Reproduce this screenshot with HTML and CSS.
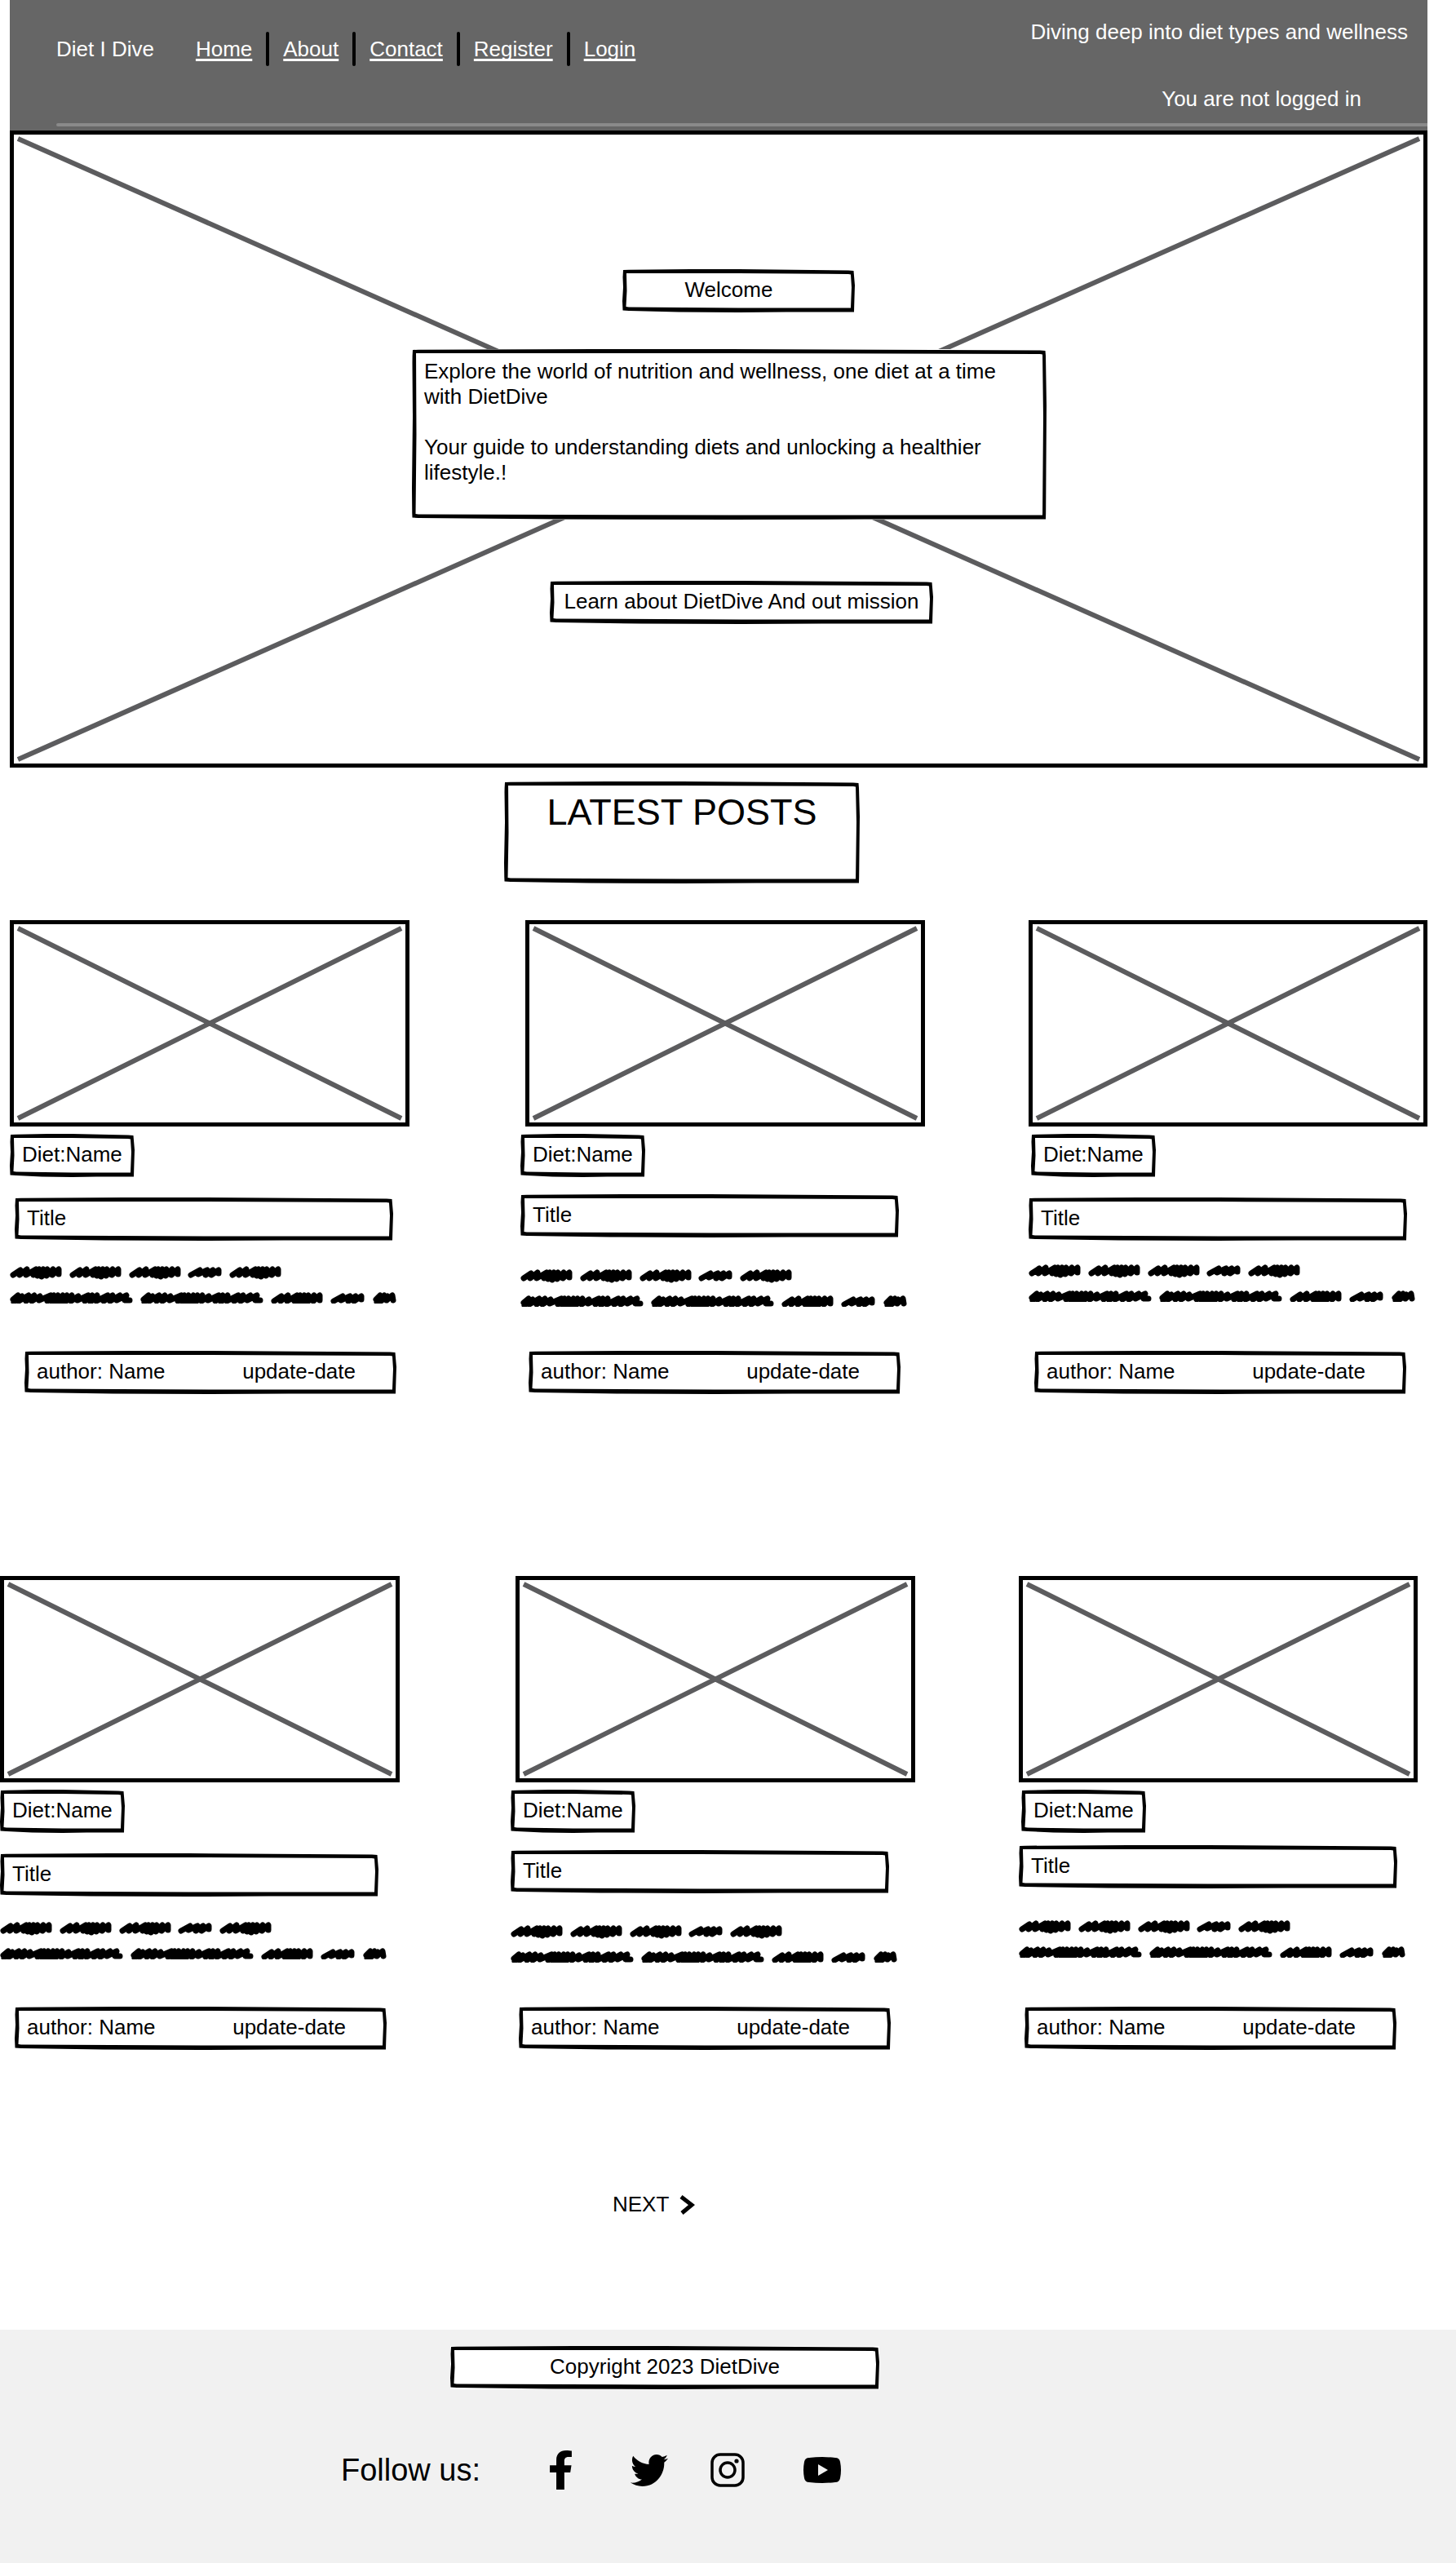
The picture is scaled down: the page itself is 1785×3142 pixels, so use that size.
FILE: index.html
```html
<!DOCTYPE html>
<html lang="en">
<head>
<meta charset="utf-8">
<meta name="viewport" content="width=device-width, initial-scale=1">
<title>Diet I Dive</title>
<link rel="stylesheet" href="styles.css">
</head>
<body>

<svg class="sprite" aria-hidden="true">
  <defs>
    <g id="word-m"><path d="M4 11L13 5L12 11L21 4L20 11L32 4L29 11L36 4L34 12L41 4L39 13L46 4L45 12L53 4L52 11L60 4L60 10"/></g>
    <g id="word-s"><path d="M4 11L15 5L13 10L24 5L22 11L31 5L29 11L38 5L38 9"/></g>
    <g id="word-xs"><path d="M4 9L9 4L5 12L14 4L10 11L18 5L17 10L24 4L25 10"/></g>
    <g id="word-l"><path d="M4 9L10 4L5 12L15 5L11 11L23 4L20 11L30 4L27 11L37 5L36 10L50 4L46 11L54 4L52 12L59 4L57 13L65 4L62 12L70 4L68 12L76 4L75 11L84 5L83 10L96 4L92 11L101 4L99 12L107 4L106 11L120 4L115 11L126 4L123 11L135 4L131 10L143 4L141 10L147 10"/></g>
    <g id="scribble">
      <use href="#word-m"/><use href="#word-m" x="73"/><use href="#word-m" x="146"/><use href="#word-s" x="218"/><use href="#word-m" x="269"/>
      <use href="#word-l" y="32"/><use href="#word-l" x="160" y="32"/><use href="#word-m" x="320" y="32"/><use href="#word-s" x="393" y="32"/><use href="#word-xs" x="445" y="32"/>
    </g>
    <g id="cross"><path d="M0 0L100 100M100 0L0 100" vector-effect="non-scaling-stroke"/></g>
  </defs>
</svg>

<div class="page">
  <header class="header">
    <div class="header-main">
      <nav class="nav" aria-label="Main">
        <span class="brand">Diet I Dive</span>
        <a href="#home">Home</a>
        <span class="sep"></span>
        <a href="#about">About</a>
        <span class="sep"></span>
        <a href="#contact">Contact</a>
        <span class="sep"></span>
        <a href="#register">Register</a>
        <span class="sep"></span>
        <a href="#login">Login</a>
      </nav>
      <div class="header-side">
        <p>Diving deep into diet types and wellness</p>
        <p class="status">You are not logged in</p>
      </div>
    </div>
    <hr class="rule">
  </header>

  <section class="hero">
    <svg class="hero-cross" viewBox="0 0 100 100" preserveAspectRatio="none" aria-hidden="true"><use href="#cross"/></svg>
    <h1 class="box welcome">Welcome</h1>
    <div class="box intro">
      <p>Explore the world of nutrition and wellness, one diet at a time with DietDive</p>
      <p>Your guide to understanding diets and unlocking a healthier lifestyle.!</p>
    </div>
    <a class="box learn" href="#mission">Learn about DietDive And out mission</a>
  </section>

  <h2 class="box latest">LATEST POSTS</h2>
</div>

<main>
  <section class="posts">
    <article class="card">
      <div class="thumb"><svg viewBox="0 0 100 100" preserveAspectRatio="none" aria-hidden="true"><use href="#cross"/></svg></div>
      <div class="box tag">Diet:Name</div>
      <h3 class="box title">Title</h3>
      <svg class="excerpt" viewBox="0 0 474 46" aria-hidden="true"><use href="#scribble"/></svg>
      <div class="box meta"><span>author: Name</span><span>update-date</span></div>
    </article>
    <article class="card">
      <div class="thumb"><svg viewBox="0 0 100 100" preserveAspectRatio="none" aria-hidden="true"><use href="#cross"/></svg></div>
      <div class="box tag">Diet:Name</div>
      <h3 class="box title">Title</h3>
      <svg class="excerpt" viewBox="0 0 474 46" aria-hidden="true"><use href="#scribble"/></svg>
      <div class="box meta"><span>author: Name</span><span>update-date</span></div>
    </article>
    <article class="card">
      <div class="thumb"><svg viewBox="0 0 100 100" preserveAspectRatio="none" aria-hidden="true"><use href="#cross"/></svg></div>
      <div class="box tag">Diet:Name</div>
      <h3 class="box title">Title</h3>
      <svg class="excerpt" viewBox="0 0 474 46" aria-hidden="true"><use href="#scribble"/></svg>
      <div class="box meta"><span>author: Name</span><span>update-date</span></div>
    </article>
  </section>

  <section class="posts posts-lower">
    <article class="card">
      <div class="thumb"><svg viewBox="0 0 100 100" preserveAspectRatio="none" aria-hidden="true"><use href="#cross"/></svg></div>
      <div class="box tag">Diet:Name</div>
      <h3 class="box title">Title</h3>
      <svg class="excerpt" viewBox="0 0 474 46" aria-hidden="true"><use href="#scribble"/></svg>
      <div class="box meta"><span>author: Name</span><span>update-date</span></div>
    </article>
    <article class="card">
      <div class="thumb"><svg viewBox="0 0 100 100" preserveAspectRatio="none" aria-hidden="true"><use href="#cross"/></svg></div>
      <div class="box tag">Diet:Name</div>
      <h3 class="box title">Title</h3>
      <svg class="excerpt" viewBox="0 0 474 46" aria-hidden="true"><use href="#scribble"/></svg>
      <div class="box meta"><span>author: Name</span><span>update-date</span></div>
    </article>
    <article class="card">
      <div class="thumb"><svg viewBox="0 0 100 100" preserveAspectRatio="none" aria-hidden="true"><use href="#cross"/></svg></div>
      <div class="box tag">Diet:Name</div>
      <h3 class="box title">Title</h3>
      <svg class="excerpt" viewBox="0 0 474 46" aria-hidden="true"><use href="#scribble"/></svg>
      <div class="box meta"><span>author: Name</span><span>update-date</span></div>
    </article>
  </section>

  <a class="next" href="#page-2">NEXT
    <svg width="20" height="24" viewBox="0 0 20 24" aria-hidden="true"><path d="M3 2L16 12L4 22" fill="none" stroke="#000" stroke-width="5"/></svg>
  </a>
</main>

<footer class="footer">
  <p class="box copyright">Copyright 2023 DietDive</p>
  <div class="social">
    <span class="follow">Follow us:</span>
    <a href="#facebook" aria-label="Facebook"><svg width="27" height="48" viewBox="22 0 276 512" preserveAspectRatio="none"><path d="M279.14 288l14.22-92.66h-88.91v-60.13c0-25.35 12.42-50.06 52.24-50.06h40.42V6.26S260.43 0 225.36 0c-73.22 0-121.08 44.38-121.08 124.72v70.62H22.89V288h81.39v224h100.17V288z"/></svg></a>
    <a href="#twitter" aria-label="Twitter"><svg width="46" height="39" viewBox="0 48 512 416" preserveAspectRatio="none"><path d="M459.37 151.716c.325 4.548.325 9.097.325 13.645 0 138.72-105.583 298.558-298.558 298.558-59.452 0-114.68-17.219-161.137-47.106 8.447.974 16.568 1.299 25.34 1.299 49.055 0 94.213-16.568 130.274-44.832-46.132-.975-84.792-31.188-98.112-72.772 6.498.974 12.995 1.624 19.818 1.624 9.421 0 18.843-1.3 27.614-3.573-48.081-9.747-84.143-51.98-84.143-102.985v-1.299c13.969 7.797 30.214 12.67 47.431 13.319-28.264-18.843-46.781-51.005-46.781-87.391 0-19.492 5.197-37.36 14.294-52.954 51.655 63.675 129.3 105.258 216.365 109.807-1.624-7.797-2.599-15.918-2.599-24.04 0-57.828 46.782-104.934 104.934-104.934 30.213 0 57.502 12.67 76.67 33.137 23.715-4.548 46.456-13.32 66.599-25.34-7.798 24.366-24.366 44.833-46.132 57.827 21.117-2.273 41.584-8.122 60.426-16.243-14.292 20.791-32.161 39.308-52.628 54.253z"/></svg></a>
    <a href="#instagram" aria-label="Instagram"><svg width="42" height="42" viewBox="0 0 42 42"><rect x="2" y="2" width="38" height="38" rx="10" fill="none" stroke="#000" stroke-width="3.500"/><circle cx="21" cy="21" r="9" fill="none" stroke="#000" stroke-width="3.500"/><circle cx="32" cy="10" r="2.600"/></svg></a>
    <a href="#youtube" aria-label="YouTube"><svg width="46" height="32" viewBox="0 0 46 32"><path fill-rule="evenodd" d="M7 1Q23 -1 39 1Q44 1 45 6Q47 16 45 26Q44 31 39 31Q23 33 7 31Q2 31 1 26Q-1 16 1 6Q2 1 7 1ZM18 9V23L30 16Z"/></svg></a>
  </div>
</footer>

</body>
</html>
```
FILE: styles.css
```css
* {
  box-sizing: border-box;
}

body {
  margin: 0;
  background: #fff;
  color: #000;
  font: 26px/31px "Liberation Sans", Arial, sans-serif;
}

h1, h2, h3, p {
  margin: 0;
  font-size: inherit;
  font-weight: 400;
}

a {
  color: inherit;
  text-decoration: none;
}

svg {
  display: block;
}

.sprite {
  display: none;
}

.page {
  margin: 0 35px 0 12px;
}

/* Hand-drawn frame: corners stay fixed, edges stretch */
.box {
  background: #fff;
  border: 8px solid transparent;
  border-image: url("data:image/svg+xml,%3Csvg xmlns='http://www.w3.org/2000/svg' width='200' height='60' viewBox='0 0 200 60'%3E%3Cpath fill-rule='evenodd' d='M1 1L8 .7L60 0L100 0L192 1.500L198.500 2L199 8L200 22L199.500 40L199 59.500L192 59.500L140 59.500L100 60L50 59.500L8 58L.5 57.500L0 45L1 25L.5 10ZM5 5L100 5L192 6L195 6.500L196 25L195 54.500L100 54.500L8 53.500L4.500 53L5.500 30Z'/%3E%3C/svg%3E") 8 stretch;
  padding: 2px 7px 4px;
}

/* Header */
.header {
  background: #666;
  color: #fff;
  padding-bottom: 5px;
}

.header-main {
  display: flex;
  justify-content: space-between;
  padding-left: 57px;
}

.nav {
  display: flex;
  align-items: center;
  gap: 17px;
  height: 42px;
  margin-top: 39px;
}

.nav a {
  text-decoration: underline;
  text-decoration-thickness: 3px;
  text-decoration-skip-ink: none;
  text-underline-offset: 3px;
}

.brand {
  margin-right: 34px;
}

.sep {
  width: 4px;
  height: 42px;
  border-radius: 2px;
  background: #000;
}

.header-side {
  display: flex;
  flex-direction: column;
  gap: 51px;
  padding: 24px 24px 14px 0;
  text-align: right;
}

.status {
  padding-right: 57px;
}

.rule {
  height: 4px;
  margin: 0 0 0 57px;
  border: 0;
  border-radius: 4px 0 0 4px;
  background: #8a8a8a;
}

/* Hero */
.hero {
  position: relative;
  display: flex;
  flex-direction: column;
  align-items: center;
  padding: 165px 20px 171px;
  border: 5px solid #000;
}

.hero-cross {
  position: absolute;
  inset: 5px;
  width: calc(100% - 10px);
  height: calc(100% - 10px);
}

.hero-cross,
.thumb svg {
  overflow: visible;
  fill: none;
  stroke: #5c5c5e;
  stroke-width: 6;
}

.hero .box {
  position: relative;
}

.welcome {
  width: 285px;
  margin-left: 48px;
  padding-right: 30px;
  text-align: center;
}

.intro {
  display: flex;
  flex-direction: column;
  gap: 31px;
  max-width: 778px;
  margin: 45px 0 75px 26px;
  padding: 4px 7px 34px;
}

.learn {
  margin-left: 56px;
  padding: 2px 9px 4px;
}

/* Section heading */
.latest {
  width: 436px;
  margin: 17px auto 45px 606px;
  padding: 4px 0 53px;
  font-size: 45px;
  line-height: 52px;
  text-align: center;
}

/* Posts */
.posts {
  display: grid;
  grid-template-columns: 626fr 623fr 489fr;
  margin: 0 35px 0 12px;
}

.posts-lower {
  margin: 223px 47px 0 0;
}

.card {
  --title-gap: 25px;
  --excerpt-gap: 31px;
  --meta-gap: 58px;
  --meta-indent: 18px;
  display: flex;
  flex-direction: column;
  align-items: flex-start;
  max-width: 496px;
}

.card:nth-child(2) {
  --title-gap: 21px;
  --excerpt-gap: 39px;
  --meta-gap: 54px;
  --meta-indent: 10px;
}

.card:nth-child(3) {
  --excerpt-gap: 29px;
  --meta-gap: 60px;
  --meta-indent: 7px;
}

.posts-lower .card:nth-child(3) {
  --title-gap: 15px;
  --excerpt-gap: 39px;
}

.thumb {
  width: 100%;
  max-width: 490px;
  height: 253px;
  margin-bottom: 9px;
  padding: 5px;
  border: 5px solid #000;
}

.card:nth-child(2) .thumb {
  align-self: flex-end;
}

.thumb svg {
  width: 100%;
  height: 100%;
}

.card:nth-child(3) .tag {
  margin-left: 3px;
}

.title {
  width: 100%;
  max-width: 464px;
  margin-top: var(--title-gap);
}

.posts:not(.posts-lower) .card:first-child .title {
  margin-left: 6px;
}

.excerpt {
  width: 100%;
  max-width: 474px;
  margin-top: var(--excerpt-gap);
  fill: none;
  stroke: #000;
  stroke-width: 7;
  stroke-linecap: round;
  stroke-linejoin: round;
}

.meta {
  display: flex;
  justify-content: space-between;
  width: 100%;
  max-width: 456px;
  margin: var(--meta-gap) 0 0 var(--meta-indent);
  padding: 2px 42px 4px 7px;
}

/* Pagination */
.next {
  display: flex;
  align-items: center;
  gap: 12px;
  width: max-content;
  margin: 174px auto 138px 751px;
}

/* Footer */
.footer {
  padding: 20px 0 90px;
  background: #f1f1f1;
}

.copyright {
  width: 526px;
  margin-left: 552px;
  text-align: center;
}

.social {
  display: flex;
  align-items: center;
  margin: 75px 0 0 418px;
}

.social a {
  margin-right: 72px;
}

.social a:nth-of-type(2) {
  margin-right: 52px;
}

.follow {
  margin-right: 85px;
  font-size: 38px;
  line-height: 44px;
}
```
